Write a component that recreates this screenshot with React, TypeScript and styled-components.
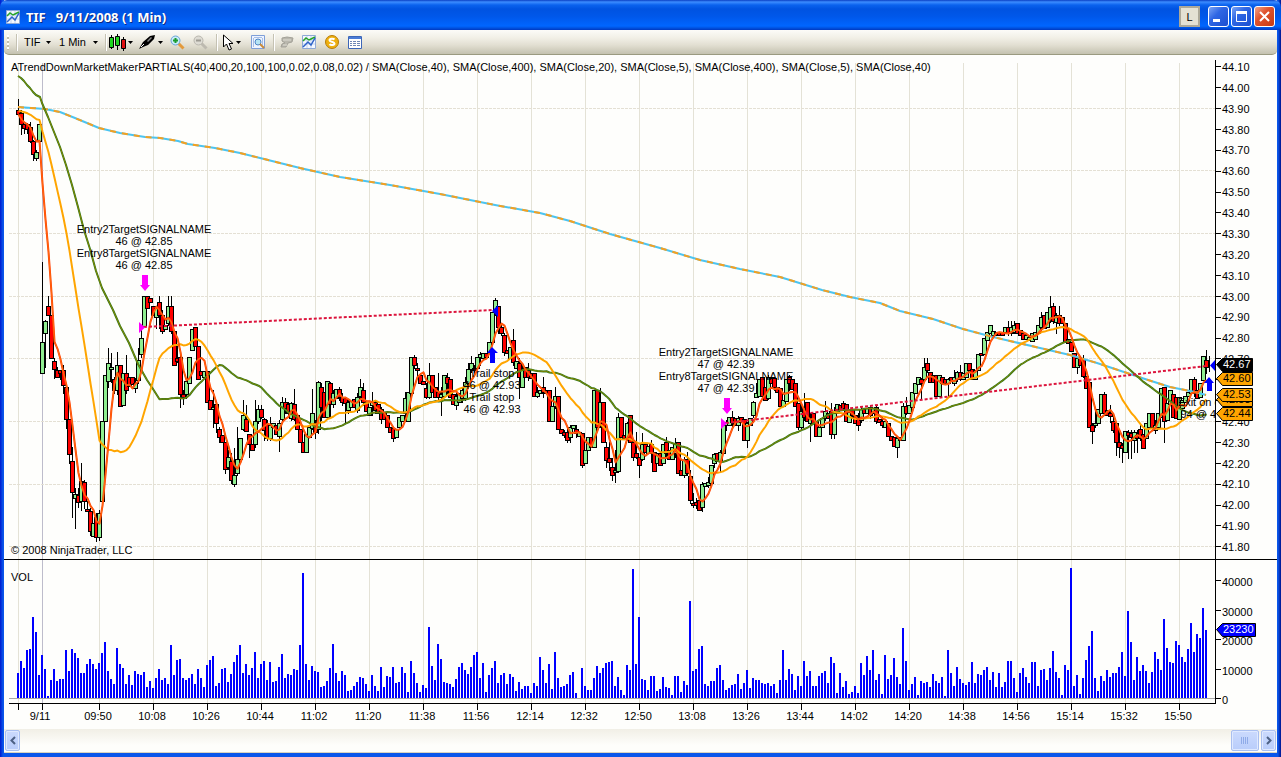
import React from "react";
import styled, { createGlobalStyle } from "styled-components";

const Global = createGlobalStyle`
  * { box-sizing: border-box; }
  body { margin: 0; background: #0046d5; font: 11px/14px "Liberation Sans", Arial, sans-serif; color: #000; }
  button, select { font: inherit; color: inherit; margin: 0; padding: 0; border: 0; background: none; }
`;

const AppWindow = styled.main`
  display: flex;
  flex-direction: column;
  min-height: 100vh;
  border: solid #0a48dc;
  border-width: 0 4px 4px;
  border-image: linear-gradient(90deg, #0019cf, #0a56ea 3px, #0a56ea calc(100% - 3px), #00138c) 0 4 4 4;
  background: #fff;
`;

const TitleBar = styled.header`
  display: flex;
  align-items: center;
  gap: 2px;
  height: 30px;
  margin: 0 -4px;
  padding: 3px 6px 0 6px;
  border-radius: 7px 7px 0 0;
  background: linear-gradient(#0a3fc4, #3c8cff 2px, #0a62ee 5px, #0053e1 9px, #0057e9 16px, #0066ff 26px, #0052e0 28px, #0038c0);
`;

const Title = styled.h1`
  display: flex;
  flex: 1;
  gap: 10px;
  margin: 0 0 0 4px;
  font: bold 13px/20px "Noto Sans", sans-serif;
  color: #fff;
  white-space: nowrap;
  text-shadow: 1px 1px #0a2a86;
`;

const LinkButton = styled.button`
  width: 21px;
  height: 21px;
  margin-right: 6px;
  border: 2px solid #aca899;
  background: #e4e1d4;
`;

const CaptionButton = styled.button<{ $danger?: boolean }>`
  display: grid;
  place-items: center;
  width: 21px;
  height: 21px;
  border: 1px solid #fff;
  border-radius: 3px;
  background: ${(p) =>
    p.$danger
      ? "linear-gradient(135deg, #f0a58c, #e0532e 40%, #c63a12)"
      : "linear-gradient(135deg, #7ba4f5, #2f66e4 40%, #1b4fd0)"};
`;

const Toolbar = styled.div`
  display: flex;
  align-items: center;
  height: 25px;
  padding: 0 3px;
  border-bottom: 1px solid #9a9a80;
  border-radius: 0 0 5px 5px;
  background: linear-gradient(#fcfbf8, #f1efe6 8px, #e2dfd2 15px, #c4c2b0);
`;

const Grip = styled.i`
  width: 2px;
  height: 15px;
  margin-right: 7px;
  background: repeating-linear-gradient(#fff 0 2px, #c2bfae 2px 4px);
`;

const Separator = styled.i`
  width: 2px;
  height: 17px;
  background: linear-gradient(90deg, #c5c2b3 1px, #fff 1px);
`;

const Picker = styled.label`
  display: flex;
  align-items: center;
  gap: 4px;
  margin-left: 6px;
  margin-right: 2px;
`;

const PickerSelect = styled.select<{ $width: number }>`
  appearance: none;
  width: ${(p) => p.$width}px;
  height: 16px;
`;

const ToolButton = styled.button<{ $gap?: number }>`
  display: flex;
  align-items: center;
  gap: 2px;
  margin-left: ${(p) => p.$gap ?? 7}px;
`;

const ChartPanel = styled.section`
  background: #fefefc;
  line-height: 0;
`;

const ChartSvg = styled.svg`
  display: block;
  width: 100%;
  height: auto;
  font: 11px "Liberation Sans", Arial, sans-serif;
`;

const ScrollBar = styled.div`
  display: flex;
  flex: 1;
  align-items: center;
  min-height: 24px;
  padding: 0 1px;
  border-bottom: 1px solid #d8d4c0;
  background: linear-gradient(#f1efe6, #fefefb 70%);
`;

const ScrollTrack = styled.div`
  display: flex;
  flex: 1;
  justify-content: flex-end;
  padding-right: 2px;
`;

const ScrollButton = styled.button<{ $width: number }>`
  display: grid;
  place-items: center;
  width: ${(p) => p.$width}px;
  height: 21px;
  border: 1px solid #a9bff0;
  border-radius: 2px;
  background: linear-gradient(#cbdafd, #b9cdfb);
  box-shadow: inset 0 0 0 1px #dfe9ff;
`;

/* Volume bars, one value per minute, three units to a pixel. */
const volumes = [
  75, 111, 90, 144, 147, 243, 198, 69, 129, 87, 6, 54, 87, 51, 57, 57, 144, 81, 147, 135, 120, 75, 75, 102, 117, 102, 87,
  105, 135, 168, 81, 57, 42, 150, 102, 90, 42, 69, 39, 81, 72, 69, 78, 33, 51, 30, 60, 87, 54, 60, 42, 159, 69, 114, 117,
  60, 54, 60, 72, 42, 87, 60, 33, 99, 114, 126, 36, 45, 87, 90, 48, 72, 108, 129, 159, 75, 102, 69, 90, 138, 60, 102, 111,
  54, 108, 48, 51, 93, 132, 60, 72, 69, 87, 84, 159, 375, 102, 54, 96, 81, 78, 33, 36, 51, 90, 162, 75, 51, 81, 69, 21,
  24, 36, 48, 63, 60, 42, 21, 69, 36, 21, 93, 33, 66, 63, 93, 45, 48, 93, 75, 18, 111, 75, 45, 18, 39, 30, 213, 96, 54,
  162, 117, 48, 45, 42, 33, 57, 93, 105, 84, 72, 93, 129, 138, 60, 105, 18, 69, 90, 111, 45, 69, 75, 42, 72, 63, 21, 48,
  27, 36, 36, 15, 45, 36, 123, 84, 45, 102, 27, 138, 60, 33, 36, 42, 69, 78, 15, 0, 90, 36, 24, 24, 60, 96, 75, 90, 105,
  108, 111, 36, 63, 24, 9, 99, 84, 387, 102, 243, 57, 54, 24, 66, 66, 21, 27, 63, 33, 30, 9, 66, 66, 18, 51, 39, 291, 81,
  87, 147, 156, 42, 36, 51, 51, 90, 99, 54, 24, 30, 39, 42, 72, 27, 45, 84, 30, 60, 54, 54, 45, 42, 45, 36, 42, 15, 54,
  144, 54, 87, 72, 24, 66, 36, 111, 66, 81, 36, 36, 66, 75, 81, 45, 123, 105, 15, 75, 33, 51, 12, 18, 36, 15, 105, 69,
  126, 84, 144, 54, 72, 12, 129, 57, 69, 120, 63, 42, 210, 111, 24, 42, 63, 9, 51, 45, 48, 33, 72, 51, 45, 63, 6, 144,
  75, 36, 93, 57, 45, 39, 48, 108, 45, 72, 69, 84, 93, 54, 78, 33, 75, 33, 48, 111, 111, 60, 18, 75, 90, 63, 45, 108,
  108, 36, 84, 87, 54, 90, 141, 78, 60, 9, 99, 84, 390, 36, 69, 12, 60, 114, 156, 201, 60, 21, 66, 51, 84, 63, 75, 75,
  93, 138, 66, 261, 168, 54, 123, 81, 99, 81, 45, 78, 138, 117, 84, 237, 150, 108, 105, 171, 159, 123, 108, 147, 225,
  138, 192, 180, 270, 204,
];

/* Candles: colour, body top, body bottom, then optionally wick top and wick bottom. */
const candleText = `
r-540,-528,-572,-525 r-530,-498,-540,-468 r-498,-485,-498,-470 r-498,-483,-500,-470 r-490,-447,-504,-445 r-447,-407,-450,-390
g-413,-395,-420,-390 g-497,-447 g157,250,-85,250 g94,130,90,232 r49,76,18,76 r76,205 r212,238,205,265 r240,262,230,262
r240,250,240,268 r240,285,225,308 r290,388,285,415 r388,493,388,520 r514,607,470,680 g613,625,595,715 r615,637,595,650
g574,632,520,660 r577,634,570,655 r656,660,632,662 r664,724,655,735 g700,739 r682,742,670,752 g670,742,660,750 g394,632 g256,394
g220,274,175,290 g232,238,190,275 r268,300,262,310 g226,300,187,313 r226,348 g250,344 r250,300,195,310 r262,288 r262,283
g278,295,265,307 g211,270,175,280 g145,193,110,200 g19,108 r19,55 r25,37 r49,76 g55,82,50,115 r37,76,19,115 r76,124,60,130
g106,118 g49,100,19,106 r49,124,19,130 r124,226 r205,212,165,216 r200,313,190,350 r313,320,300,342 g274,313,270,325 g200,280
g118,181 r112,169 r169,268 r244,256 g244,262 r244,337 r330,358 g350,356,300,412 r343,400,335,425 r418,440,412,455 r434,457
r457,538,457,550 g502,532,480,538 r514,571,490,578 g556,583,474,588 g508,550,412,555 g445,508 g376,418,330,420 r388,424,345,424
r433,463,433,500 r463,480 g394,463,330,470 g358,394,345,400 r358,382,345,385 r388,420,385,450 r403,445,390,450 g406,445,380,450
g400,412 r406,432 g400,438,390,483 g337,388,322,400 r337,355,325,370 r343,370,335,382 g340,385,335,390 r343,388,298,390
r376,418 r418,457 r457,487 g433,487 g412,440 g370,415,298,418 r400,425,390,445 g277,418,272,430 r290,350,280,390 r307,382
g274,382 r280,343,275,380 g310,343,300,350 g298,325 r298,320,290,330 r320,337,310,345 r325,340,325,400 g337,360,330,370
g332,350 r328,350 g320,360,310,365 g290,318,268,325 r301,337,280,345 r337,364 g350,376 g335,345,307,376 r335,360,330,370
r343,370 r358,388,350,400 r370,388 r376,412 r412,427 r415,445,410,452 g418,440 g382,412 g376,394 g325,370,307,380 g307,394
g200,310 r200,226,195,235 r235,241,220,258 r256,280 r274,282 r295,320,280,325 g256,320,220,325 r256,307 r290,320 r305,320,250,330
g313,320,290,376 g256,318 r262,280,250,310 r268,320 r313,343 g318,345,310,358 g310,335 g300,325,290,335 g276,325,262,330
g238,278,220,285 g220,238,198,245 r235,240,225,250 g200,235 g193,200,187,225 g188,205 r188,200 g157,190 g67,157 g31,67,25,75
r49,112,49,130 r112,130,105,135 r136,187,130,195 r180,190 g170,205 r151,215,118,225 g212,235 r220,262,205,325 g240,290,225,290
r232,262 r240,262,220,270 r250,265 r250,319 g307,318,290,322 g300,310 r290,305,262,320 r300,310 r301,394 g349,394 g319,349,290,355
r319,418 r418,428 r425,435,420,440 r425,450,410,455 g412,440,405,455 g406,415 r418,430,405,440 g425,438 r430,526,430,532 g480,520
g440,480 r440,470 g301,470 r301,412 g337,400,295,410 r337,457 r470,511,455,530 r505,515,457,540 r532,556,505,570 g540,545,480,577
g382,544,370,545 r382,440 r436,445 g400,445,395,450 r376,457 r457,502,450,510 r490,502,425,505 r502,526,500,562 g463,508,430,510
r463,485 g468,490 r463,490,450,515 r487,544 g490,520 r490,526 g463,520 r457,490,440,500 r480,508 g470,508 g460,490,445,500
r457,550 r540,556 g510,556,500,562 r508,550,485,555 r559,631,540,640 r638,645,610,652 r635,645,625,655 r631,661 g583,652,575,662
g580,588 g577,585,560,590 g526,580 g493,520,490,530 r490,512 g487,512,480,545 g406,490 g395,405,390,420 g382,404 r382,395,364,410
r385,405 g385,405,378,420 r382,395 r388,451 g400,451,395,470 g385,405 g337,376,332,380 g310,320,280,322 g268,318 r262,318
r290,330 g262,325,256,328 r265,280 r265,290,260,300 r290,305 r295,348 g330,348 g268,332 r262,280,256,300 r268,298 r280,348
r340,412,340,418 g364,412,340,418 r350,380,310,390 r337,394 g385,400,370,452 r370,400 r394,438 g410,438 g385,410 g364,385,332,390
r370,385 r364,432,340,445 g370,433,350,445 g343,370 r345,360 r338,355,332,360 r343,392 g365,395 r358,376,350,380 r376,400
r388,405,370,420 g358,390,348,395 r358,370 g355,370 r350,375,345,385 g355,370 r350,392,345,400 r388,395 r392,404,380,410
g394,410 r400,438 r438,450 r440,468 g445,470,440,502 g440,450 g349,450,340,450 r349,370,320,372 g346,370 g307,350 g280,308
g262,282 r268,280,265,325 g232,268,205,270 r220,240,205,245 r245,275 r256,275 r256,318 g256,318 r262,280 r268,280 g268,280,265,318
r262,270 g262,280,240,285 g245,268,242,272 r245,268,226,270 g250,268 g220,260 r220,240 r238,268 g240,268 g193,240 r188,195
g145,192 g127,150 g106,130 g124,135 r125,135 r125,135 r125,135 g112,125 r112,130,94,135 g110,130,94,135 g106,125,94,130 r100,130
r120,135 r130,147 g135,148 g142,150 g130,152 g125,148 g106,130 g82,112,65,120 r76,115 g67,112 g50,88,19,95 r49,94,40,100
g75,95,70,130 r75,100,49,105 r82,100 r100,157 r148,160 r157,182 r190,232 g205,232,200,250 r205,225 r207,257,195,260 r257,294
r275,412 r406,424,400,458 g400,406,360,410 g358,400 g313,370 r313,370,305,375 r360,375 r370,377,345,395 r394,420,375,425
r400,457,395,495 r457,470,425,500 r465,475,460,515 g424,487 r425,435,420,505 r430,440,420,505 g425,450,420,485 r435,445,420,485
r418,445,405,450 r433,475 g400,445 g370,410 r370,410 g405,420,390,430 g370,410 g295,380 r290,394,290,457 g340,390 g300,342
r313,382 r322,385 g320,388 g330,355 g318,335 g305,318 g268,310 r268,310,262,318 r300,325 g280,320 g199,270 r211,232,180,250
`;

type Candle = { up: boolean; top: number; bottom: number; high: number; low: number; close: number };

const candles: Candle[] = candleText
  .trim()
  .split(/\s+/)
  .map((entry) => {
    const [top, bottom, high = top, low = bottom] = entry.slice(1).split(",").map(Number);
    const up = entry[0] === "g";
    return { up, top, bottom, high, low, close: up ? top : bottom };
  });

const levelY = (v: number) => Math.round(290 + v / 3);
const barX = (i: number) => 18 + 3 * i;

const sma = (period: number, first: number, seed?: number) => {
  const points: string[] = [];
  for (let i = first; i < candles.length; i++) {
    let sum = 0;
    let count = 0;
    for (let k = i - period + 1; k <= i; k++) {
      if (k >= 0) sum += candles[k].close;
      else if (seed !== undefined) sum += seed;
      else continue;
      count++;
    }
    points.push(`${barX(i) + 0.5},${(290.5 + sum / count / 3).toFixed(1)}`);
  }
  return points.join(" ");
};

const sma5 = sma(5, 0);
const sma20 = sma(20, 0, -540);
const sma40 =
  "18,76 21,78 24,81 27,85 30,88 33,92 36,95 40,97 42,103 48,117 54,132 60,147 66,165 72,185 78,207 84,230 90,249 96,271 102,288 113,310 120,326 129,343 138,364 147,380 153,389 " +
  sma(40, 47);
const sma400 =
  "18,107 45,109 60,112 75,118 99,128 120,133 145,137 160,138 178,141 188,144 215,148 240,153 260,158 300,168 340,177 390,185 440,194 495,205 540,213 570,221 610,234 660,248 700,260 740,269 780,277 822,290 850,297 880,303 900,311 933,319 963,329 993,337 1010,341 1040,348 1070,355 1097,363 1127,373 1145,379 1170,387 1195,392 1206,395";

const timeLabels = [
  "09:50", "10:08", "10:26", "10:44", "11:02", "11:20", "11:38", "11:56", "12:14", "12:32", "12:50",
  "13:08", "13:26", "13:44", "14:02", "14:20", "14:38", "14:56", "15:14", "15:32", "15:50",
];

const rowY = [108, 170, 233, 296, 358, 421, 484, 546];

const Signal = ({ x, y, lines }: { x: number; y: number; lines: string[] }) => (
  <g textAnchor="middle">
    {lines.map((line, i) => (
      <text key={i} x={x} y={y + 12 * i}>{line}</text>
    ))}
  </g>
);

const PriceTag = ({ y, value, fill, ink = "#000", right = 1252 }: { y: number; value: string; fill: string; ink?: string; right?: number }) => (
  <g>
    <path d={`M1216.5 ${y}.5L1222.5 ${y - 6}.5H${right}.5V${y + 7}.5H1222.5Z`} fill={fill} stroke="#000" />
    <text x="1223" y={y + 4} fill={ink}>{value}</text>
  </g>
);

const Chart = () => (
  <ChartSvg viewBox="4 55 1273 674" role="img" aria-label="TIF one minute price and volume chart">
    <defs>
      <clipPath id="plot"><rect x="4" y="55" width="1211" height="674" /></clipPath>
    </defs>
    <g shapeRendering="crispEdges">
      {[18, ...timeLabels.map((_, i) => 99 + 54 * i)].map((x) => (
        <rect key={x} x={x} y="63" width="1" height="640" fill="#e4e2d6" />
      ))}
      <rect x="42" y="63" width="1" height="640" fill="#bdbccb" />
      {rowY.map((y) => (
        <path key={y} d={`M9 ${y}.5H1215`} stroke="#e4e0d4" strokeDasharray="3 1" />
      ))}
      <rect x="9" y="698" width="1206" height="1" fill="#a8a8a8" />
      {volumes.map((v, i) => (
        <rect key={i} x={17 + 3 * i} y={698 - v / 3} width="2" height={v / 3} fill="#00f" />
      ))}
      {candles.map((c, i) => {
        const x = barX(i);
        const top = levelY(c.top);
        const height = Math.max(levelY(c.bottom) - top + 1, 3);
        return (
          <g key={i}>
            <rect x={x} y={levelY(c.high)} width="1" height={levelY(c.low) - levelY(c.high) + 1} />
            <rect x={x - 2} y={top} width="5" height={height} />
            <rect x={x - 1} y={top + 1} width="3" height={height - 2} fill={c.up ? "#90ee90" : "#f00"} />
          </g>
        );
      })}
      <rect x="1209" y="356" width="1" height="16" />
    </g>

    <g fill="none" strokeLinejoin="round">
      <polyline points={sma400} stroke="#4cc4f0" strokeWidth="2" />
      <polyline points={sma400} stroke="#f5a020" strokeWidth="2" strokeDasharray="6 6" />
      <polyline points={sma40} stroke="#2a7a1e" strokeWidth="2" />
      <polyline points={sma40} stroke="#8a8400" strokeWidth="1" />
      <polyline points={sma20} stroke="#ffa500" strokeWidth="2" />
      <polyline points={sma5} stroke="#ff3c00" strokeWidth="2" />
      <polyline points={sma5} stroke="#ff6c10" strokeWidth="1" />
      <path d="M144 327L493 310M726 423L1206 366" stroke="#dc143c" strokeWidth="2" strokeDasharray="3 2" />
    </g>

    <g clipPath="url(#plot)">
      <Signal x={144} y={233} lines={["Entry2TargetSIGNALNAME", "46 @ 42.85", "Entry8TargetSIGNALNAME", "46 @ 42.85"]} />
      <Signal x={492} y={377} lines={["Trail stop", "46 @ 42.93", "Trail stop", "46 @ 42.93"]} />
      <Signal x={726} y={356} lines={["Entry2TargetSIGNALNAME", "47 @ 42.39", "Entry8TargetSIGNALNAME", "47 @ 42.39"]} />
      <Signal x={1209} y={406} lines={["Exit on close", "94 @ 42.67"]} />
    </g>

    <path d="M142 275h6v10h2l-5 6-5-6h2zM139 322v11l6-5.500zM724 398h6v10h2l-5 6-5-6h2zM721 418v11l6-5.500z" fill="#f0f" />
    <path d="M492 347l6 6h-3v10h-5v-10h-3zM498 305v12l-6-6zM1209 377l5 6h-2v8h-5v-8h-3zM1215 360v11l-5-5.500z" fill="#00f" />

    <g shapeRendering="crispEdges">
      <rect x="1215" y="60" width="1" height="644" />
      <rect x="9" y="703" width="1207" height="1" />
      <rect x="4" y="559" width="1273" height="1" />
      {[18, 42, ...timeLabels.map((_, i) => 99 + 54 * i)].map((x) => (
        <rect key={x} x={x} y="703" width="1" height="7" />
      ))}
      {Array.from({ length: 24 }, (_, i) => (
        <rect key={i} x="1215" y={Math.round(66.300 + 20.870 * i)} width="6" height="1" />
      ))}
      {[698, 669, 639, 610, 580].map((y) => (
        <rect key={y} x="1215" y={y} width="6" height="1" />
      ))}
    </g>

    {Array.from({ length: 24 }, (_, i) => (
      <text key={i} x="1222" y={Math.round(71 + 20.870 * i)}>{(44.1 - 0.1 * i).toFixed(2)}</text>
    ))}
    {["0", "10000", "20000", "30000", "40000"].map((label, i) => (
      <text key={label} x="1222" y={Math.round(704 - 29.500 * i)}>{label}</text>
    ))}
    <g textAnchor="middle">
      <text x="40" y="720">9/11</text>
      {timeLabels.map((label, i) => (
        <text key={label} x={98 + 54 * i} y="720">{label}</text>
      ))}
    </g>
    <text x="11" y="71">
      ATrendDownMarketMakerPARTIALS(40,400,20,100,100,0.02,0.08,0.02) / SMA(Close,40), SMA(Close,400), SMA(Close,20), SMA(Close,5), SMA(Close,400), SMA(Close,5), SMA(Close,40)
    </text>
    <text x="11" y="554">© 2008 NinjaTrader, LLC</text>
    <text x="11" y="581">VOL</text>

    <PriceTag y={399} value="42.53" fill="#ffa500" />
    <PriceTag y={394} value="42.53" fill="#ffa500" />
    <PriceTag y={413} value="42.44" fill="#ffa500" />
    <PriceTag y={378} value="42.60" fill="#ffa500" />
    <PriceTag y={364} value="42.67" fill="#000" ink="#fff" />
    <PriceTag y={629} value="23230" fill="#00f" ink="#fff" right={1255} />
  </ChartSvg>
);

const Caret = () => (
  <svg width="5" height="3" aria-hidden="true"><path d="M0 0h5L2.500 3z" /></svg>
);

const ChartIcon = () => (
  <svg width="14" height="14" viewBox="0 0 14 14" aria-hidden="true">
    <path d="M0.500 0.500h13v13h-13z" fill="#f4f8ff" stroke="#8fa9d6" />
    <path d="M1 5h12M1 9h12M5 1v12M9 1v12" stroke="#c3d3ee" />
    <path d="M1 6l3-3 3 2 2-1 4-2" fill="none" stroke="#28a428" strokeWidth="1.500" />
    <path d="M1 12l5-5 3 3 4-7" fill="none" stroke="#2d62c8" strokeWidth="1.500" />
  </svg>
);

const CandlesIcon = () => (
  <svg width="17" height="17" viewBox="0 0 17 17" aria-hidden="true">
    <path d="M2.500 1v14M8.500 0v16M14.500 3v14" stroke="#000" />
    <path d="M0.500 3.500h4v10h-4zM6.500 2.500h4v9h-4z" fill="#1fd51f" stroke="#000" />
    <path d="M12.500 5.500h4v9h-4z" fill="#e01010" stroke="#000" />
  </svg>
);

const PenIcon = () => (
  <svg width="17" height="16" viewBox="0 0 17 16" aria-hidden="true">
    <path d="M0 15L4 8l7-6 5-1-1 4-6 6-5 2z" />
    <path d="M8 7l4-4 1 1-4 4z" fill="#8a8a8a" />
    <path d="M2 13l3-3" stroke="#fff" />
  </svg>
);

const ZoomIcon = ({ plus }: { plus?: boolean }) => (
  <svg width="15" height="15" viewBox="0 0 15 15" aria-hidden="true">
    <path d="M8.500 8.500l5 5" stroke={plus ? "#e39a3c" : "#bdbab0"} strokeWidth="3" />
    <circle cx="5.500" cy="5.500" r="4.500" fill={plus ? "#c8ecf8" : "#dddbd3"} stroke={plus ? "#6aa5d8" : "#b9b7ae"} />
    <path d={plus ? "M3 5.500h5M5.500 3v5" : "M3 5.500h5"} stroke={plus ? "#1b9c2e" : "#9d9b93"} strokeWidth="2" />
  </svg>
);

const CursorIcon = () => (
  <svg width="11" height="17" viewBox="0 0 11 17" aria-hidden="true">
    <path d="M0.500 1v12l3-3 2.500 6 2.500-1L6 9.500h4z" fill="#fff" stroke="#000" />
  </svg>
);

const InspectIcon = () => (
  <svg width="14" height="14" viewBox="0 0 14 14" aria-hidden="true">
    <path d="M0.500 0.500h13v13h-13z" fill="#eef4ff" stroke="#7f9fd8" />
    <path d="M2.500 3v9M11.500 3v7M3 2.500h8" stroke="#a9bfe6" />
    <circle cx="7" cy="7" r="3" fill="#b6e4f4" stroke="#4d86c8" />
    <path d="M9 9l4 4" stroke="#c98a3a" strokeWidth="2" />
  </svg>
);

const HandIcon = () => (
  <svg width="14" height="12" viewBox="0 0 14 12" aria-hidden="true">
    <path d="M2 2l5-1 6 1-1 4-4 1-2 4-5 0 1-3 3-1-3-2z" fill="#b9b7ad" stroke="#a3a198" />
    <path d="M3 4h8M3 9h4" stroke="#dedcd3" />
  </svg>
);

const CoinIcon = () => (
  <svg width="14" height="14" viewBox="0 0 14 14" aria-hidden="true">
    <circle cx="7" cy="7" r="6.500" fill="#eeb010" stroke="#b87c08" />
    <path d="M9.500 4.500c-1-1-5-1-5 .700s5 1.400 5 3.300-4 2-5 .700" fill="none" stroke="#fff" strokeWidth="2" />
  </svg>
);

const TableIcon = () => (
  <svg width="14" height="13" viewBox="0 0 14 13" aria-hidden="true">
    <path d="M0.500 0.500h13v12h-13z" fill="#fff" stroke="#3c66b8" />
    <path d="M1 1h12v2H1z" fill="#4b7cd6" />
    <path d="M2 5.500h2M5 5.500h3M9 5.500h3M2 7.500h2M5 7.500h3M9 7.500h3M2 9.500h2M5 9.500h3M9 9.500h3" stroke="#6f87b5" />
  </svg>
);

export default function App() {
  return (
    <>
      <Global />
      <AppWindow>
        <TitleBar>
          <ChartIcon />
          <Title><span>TIF</span><span>9/11/2008 (1 Min)</span></Title>
          <LinkButton>L</LinkButton>
          <CaptionButton aria-label="Minimize">
            <svg width="13" height="13"><path d="M1 9h7v3H1z" fill="#fff" /></svg>
          </CaptionButton>
          <CaptionButton aria-label="Maximize">
            <svg width="13" height="13"><path d="M1.500 2.500h10v9h-10z" fill="none" stroke="#fff" /><path d="M1 1h11v3H1z" fill="#fff" /></svg>
          </CaptionButton>
          <CaptionButton $danger aria-label="Close">
            <svg width="13" height="13"><path d="M2 2l9 9M11 2l-9 9" stroke="#fff" strokeWidth="2" /></svg>
          </CaptionButton>
        </TitleBar>

        <Toolbar>
          <Grip />
          <Separator />
          <Picker>
            <PickerSelect $width={18} aria-label="Instrument"><option>TIF</option></PickerSelect>
            <Caret />
          </Picker>
          <Picker>
            <PickerSelect $width={30} aria-label="Interval"><option>1 Min</option></PickerSelect>
            <Caret />
          </Picker>
          <ToolButton as="i" $gap={5}><Separator /></ToolButton>
          <ToolButton aria-label="Chart style" $gap={2}><CandlesIcon /><Caret /></ToolButton>
          <ToolButton aria-label="Drawing tools" $gap={6}><PenIcon /><Caret /></ToolButton>
          <ToolButton aria-label="Zoom in"><ZoomIcon plus /></ToolButton>
          <ToolButton aria-label="Zoom out" $gap={8}><ZoomIcon /></ToolButton>
          <ToolButton as="i" $gap={8}><Separator /></ToolButton>
          <ToolButton aria-label="Cursor" $gap={5}><CursorIcon /><Caret /></ToolButton>
          <ToolButton aria-label="Data box" $gap={10}><InspectIcon /></ToolButton>
          <ToolButton as="i" $gap={8}><Separator /></ToolButton>
          <ToolButton aria-label="Chart trader" $gap={5}><HandIcon /></ToolButton>
          <ToolButton aria-label="Indicators" $gap={8}><ChartIcon /></ToolButton>
          <ToolButton aria-label="Strategies" $gap={9}><CoinIcon /></ToolButton>
          <ToolButton aria-label="Properties" $gap={9}><TableIcon /></ToolButton>
        </Toolbar>

        <ChartPanel>
          <Chart />
        </ChartPanel>

        <ScrollBar>
          <ScrollButton $width={15} aria-label="Scroll left">
            <svg width="6" height="9"><path d="M5 1L1.500 4.500 5 8" fill="none" stroke="#4d6185" strokeWidth="2" /></svg>
          </ScrollButton>
          <ScrollTrack>
            <ScrollButton $width={28} aria-label="Scroll thumb">
              <svg width="8" height="7"><path d="M0.500 0v7M2.500 0v7M4.500 0v7M6.500 0v7" stroke="#8fabe8" /></svg>
            </ScrollButton>
          </ScrollTrack>
          <ScrollButton $width={15} aria-label="Scroll right">
            <svg width="6" height="9"><path d="M1 1l3.500 3.500L1 8" fill="none" stroke="#4d6185" strokeWidth="2" /></svg>
          </ScrollButton>
        </ScrollBar>
      </AppWindow>
    </>
  );
}
